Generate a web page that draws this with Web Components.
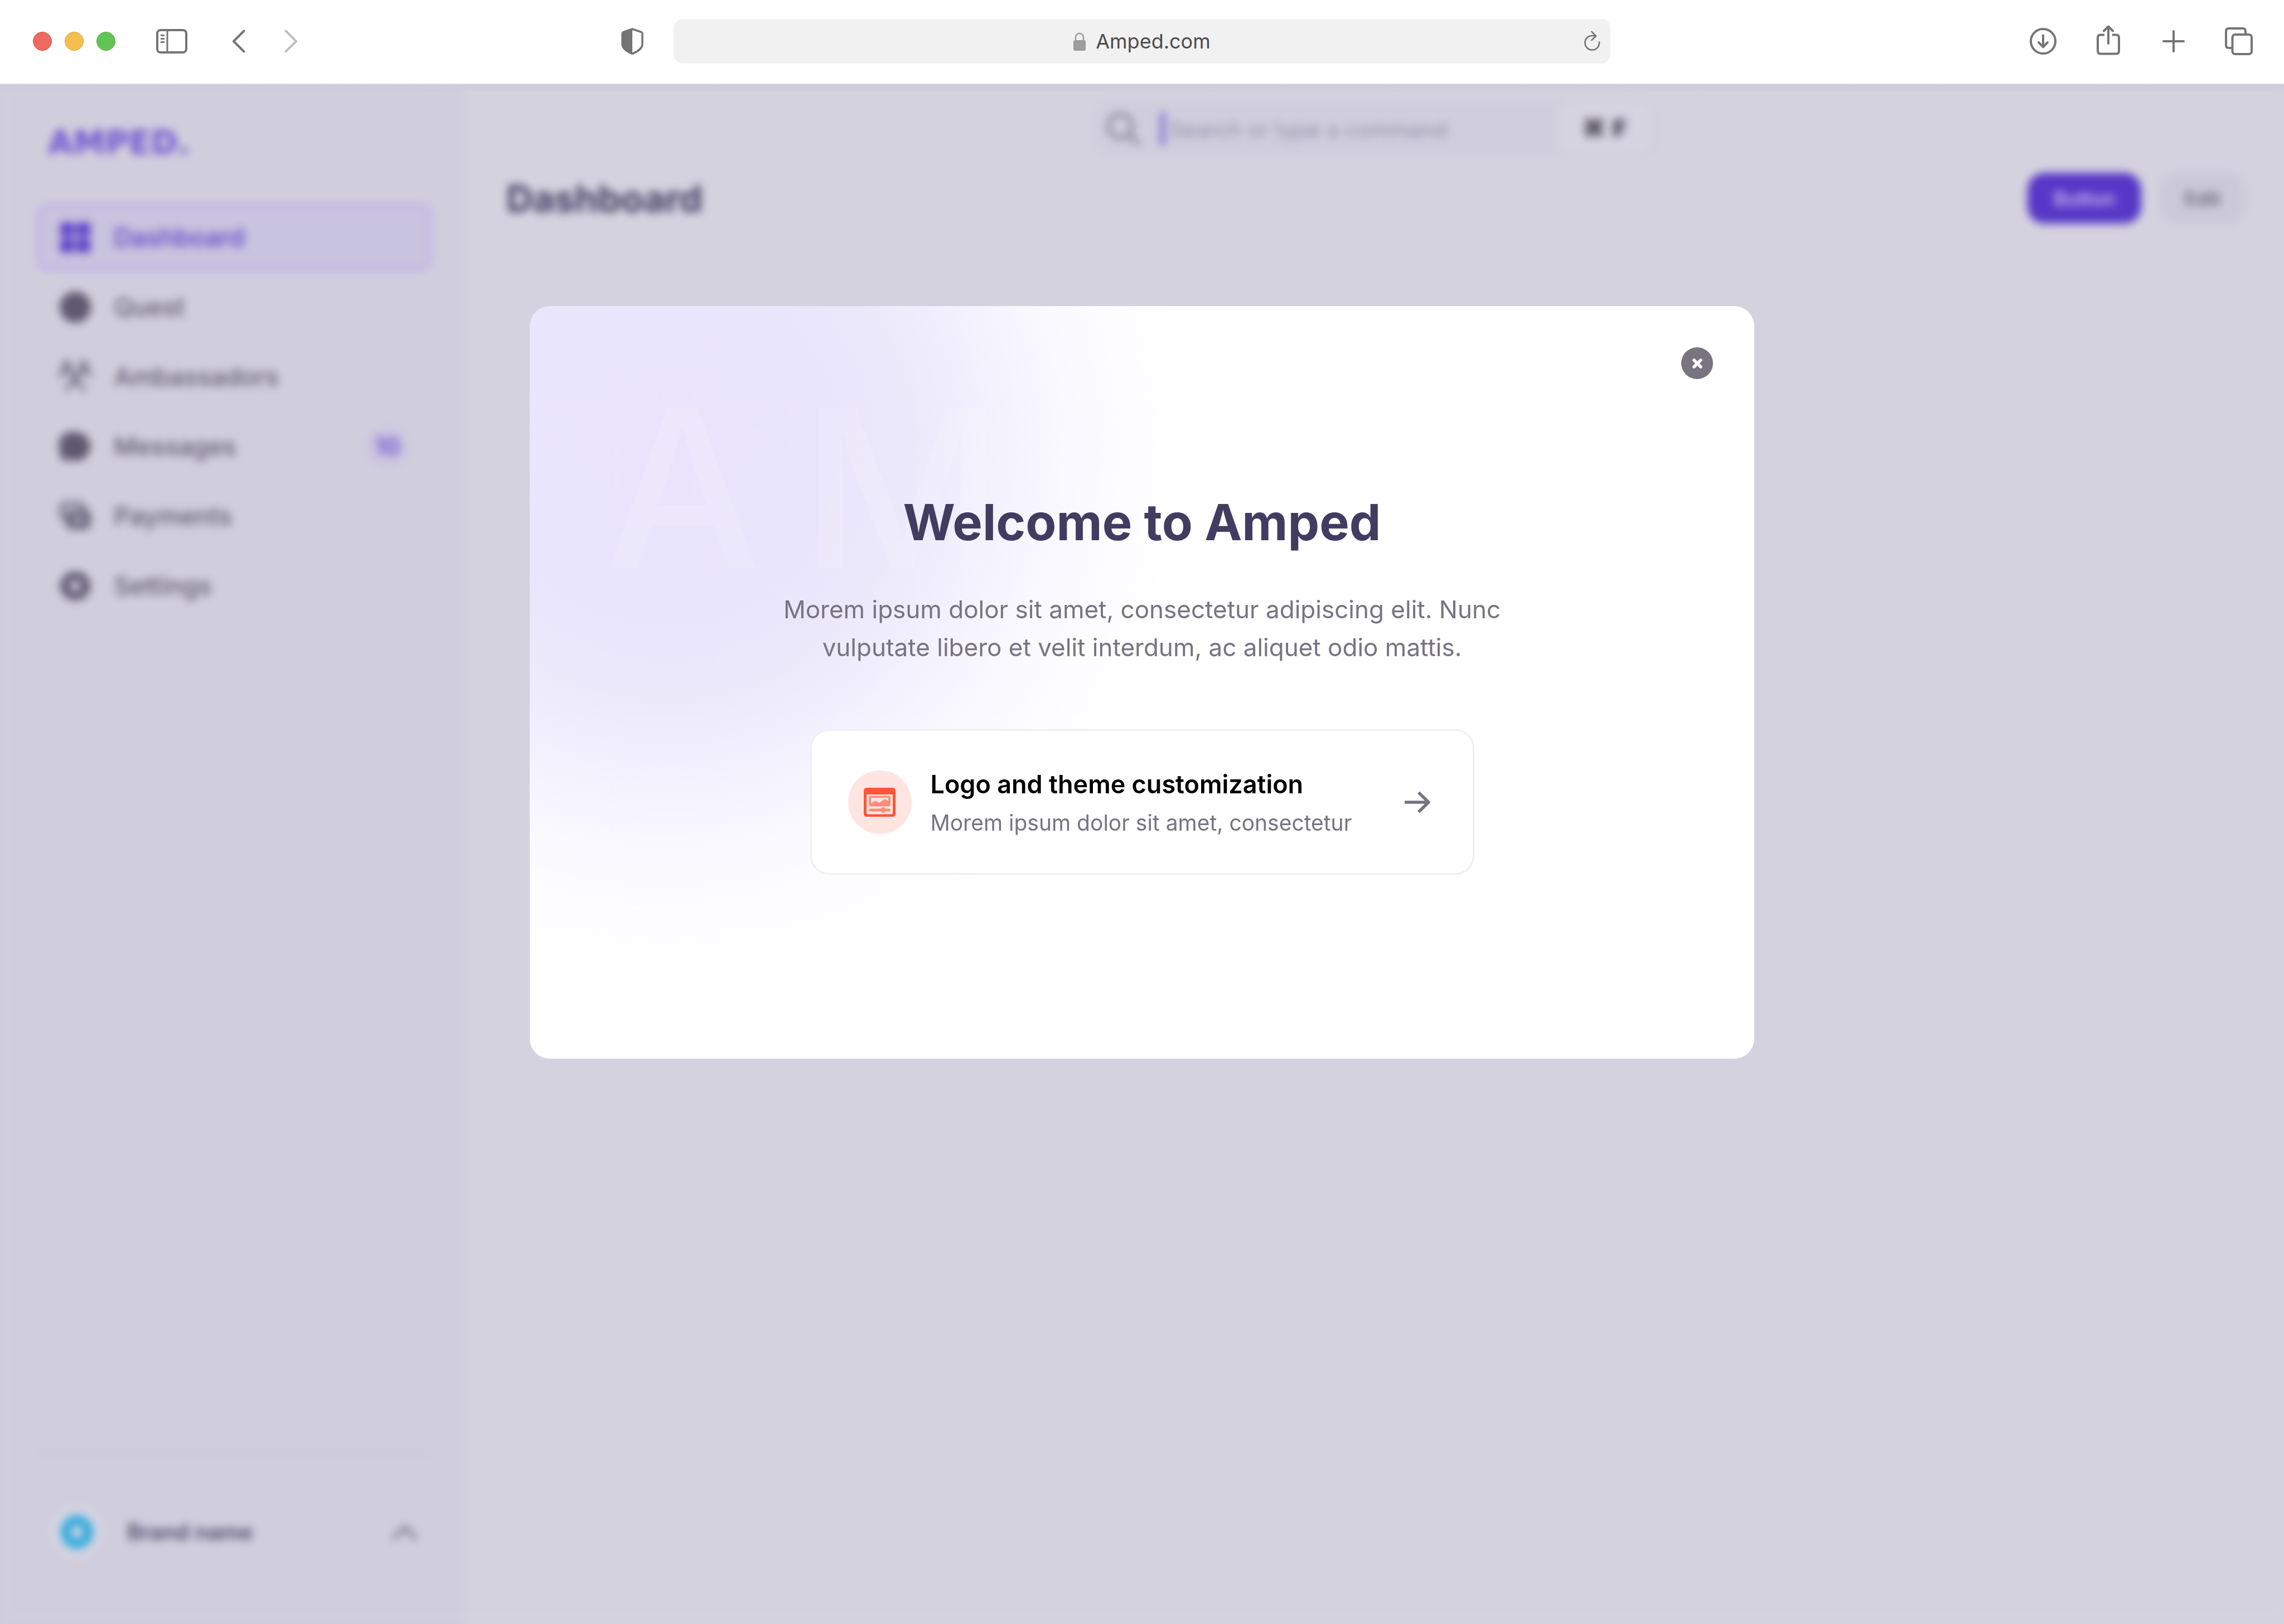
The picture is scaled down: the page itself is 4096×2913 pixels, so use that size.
<!DOCTYPE html>
<html lang="en">
<head>
<meta charset="utf-8">
<title>Amped</title>
<style>
  html, body { margin: 0; height: 100%; }
  body {
    font-family: Inter, "Noto Sans", sans-serif;
    background: #d4d2df;
    color: #433c61;
  }
</style>
</head>
<body>
<amped-window></amped-window>

<script>
const base = `*{box-sizing:border-box}a{color:inherit;text-decoration:none}
button,input{font:inherit;color:inherit;border:0;background:none;padding:0;margin:0;outline:0}
h1,h2,p{margin:0}`;

function define(name, css, html) {
  customElements.define(name, class extends HTMLElement {
    constructor() {
      super();
      const t = document.createElement('template');
      t.innerHTML = `<style>${base}${css}</style>${html}`;
      this.attachShadow({ mode: 'open' }).append(t.content.cloneNode(true));
    }
  });
}

/* ---------- icons ---------- */
const line = (w, d) => `<g fill="none" stroke="currentColor" stroke-width="${w}" stroke-linecap="round" stroke-linejoin="round">${d}</g>`;
const ICONS = {
  panel: ['0 0 56 44', line(4, `<rect x="2" y="2" width="52" height="40" rx="6"/><path d="M20 2v40M8 11.500h7M8 17.500h7M8 23.500h7" stroke-linecap="butt" stroke-width="3"/>`)],
  back: ['0 0 24 42', line(4, `<path d="M21.500 2.500 3 21l18.500 18.500"/>`)],
  forward: ['0 0 24 42', line(4, `<path d="M2.500 2.500 21 21 2.500 39.500"/>`)],
  shield: ['0 0 40 48', `<path d="M20 2 4 7.500Q2 8.300 2 10.500V29c0 8 8 13 18 17.500C30 42 38 37 38 29V10.500q0-2.200-2-3Z" fill="none" stroke="currentColor" stroke-width="3.500" stroke-linejoin="round"/><path d="M20 2 4 7.500Q2 8.300 2 10.500V29c0 8 8 13 18 17.500Z" fill="currentColor"/>`],
  lock: ['0 0 22 33', `<rect y="14" width="22" height="19" rx="3" fill="currentColor"/><path d="M4 15V9a7 7.300 0 0 1 14 0v6" fill="none" stroke="currentColor" stroke-width="2.600"/>`],
  reload: ['0 0 30 38', line(2.6, `<path d="M27 20.500A12.800 12.800 0 1 1 14.500 9q3.500 0 6.500.8M13.500 1.800 21 9.500l-7.500 7.500"/>`)],
  download: ['0 0 48 48', line(4, `<circle cx="24" cy="24" r="22"/><path d="M24 13.500v20M16 26l8 8.300 8-8.300"/>`)],
  share: ['0 0 42 54', line(4, `<path d="M14 17.500H7q-5 0-5 5V46q0 5.500 5 5.500h28q5 0 5-5.500V22.500q0-5-5-5h-7" stroke-linecap="butt"/><path d="M21 33V2.500M13 10.500l8-8 8 8"/>`)],
  plus: ['0 0 40 40', line(4, `<path d="M20 2v36M2 20h36"/>`)],
  tabs: ['0 0 50 50', line(4, `<path d="M12 37H7q-5 0-5-5V7q0-5 5-5h25q5 0 5 5v5" stroke-linecap="butt"/><rect x="13.500" y="13" width="34.500" height="35" rx="5"/>`)],
  search: ['0 0 62 62', line(7, `<circle cx="26" cy="26" r="21"/><path d="m41 41 17 17"/>`)],
  grid: ['0 0 58 58', `<g fill="currentColor"><rect x="2" y="2" width="25" height="25" rx="5"/><rect x="31" y="2" width="25" height="25" rx="5"/><rect x="2" y="31" width="25" height="25" rx="5"/><rect x="31" y="31" width="25" height="25" rx="5"/></g>`],
  quest: ['0 0 58 58', `<circle cx="29" cy="29" r="28" fill="currentColor"/>`],
  people: ['0 0 58 58', line(5, `<circle cx="14" cy="8" r="6"/><circle cx="44" cy="8" r="6"/><circle cx="29" cy="29" r="6"/><path d="M2 29q1-11 11-11 7 0 9 5M56 29q-1-11-11-11-7 0-9 5M14 54q2-14 15-14t15 14"/>`)],
  chat: ['0 0 58 58', `<path d="M30 3a26 26 0 1 1-10 50q-4-1.500-7 0-4 2-9 1.500-2-.5-1-2.500 2-3 1-7A26 26 0 0 1 30 3Z" fill="currentColor"/>`],
  cards: ['0 0 58 58', line(6, `<path d="M12 34q-8-2-8-10V15q0-9 9-9h22q8 0 10 8"/>`) + `<rect x="12" y="17" width="45" height="36" rx="10" fill="currentColor" opacity=".85"/><circle cx="34" cy="35" r="6" fill="#d0cedd"/>`],
  gear: ['0 0 58 58', `<path d="M29 2 37 5.500 46 6.500 50 15 56 22v14l-6 7-4 8.500-9 1L29 56l-8-3.500-9-1L8 43l-6-7V22l6-7 4-8.500 9-1Z" fill="currentColor"/><circle cx="29" cy="29" r="10" fill="#d0cedd"/>`],
  up: ['0 0 52 52', line(6, `<path d="m7 37 19-20 19 20"/>`)],
  close: ['0 0 20 20', `<path d="m4 4 12 12M16 4 4 16" stroke="currentColor" stroke-width="5.500" stroke-linecap="round"/>`],
  arrow: ['0 0 46 40', `<path d="M0 20h43M25 2.500 43 20 25 37.500" fill="none" stroke="currentColor" stroke-width="5.500" stroke-linejoin="round"/>`],
  theme: ['0 0 57 52', `<path fill="#ff5436" fill-rule="evenodd" d="M6 0h45q6 0 6 6v40q0 6-6 6H6q-6 0-6-6V6Q0 0 6 0ZM5 12v33q0 2.500 2.500 2.500h42q2.500 0 2.500-2.500V12Z"/>
    <g fill="#ff8b7b"><path fill-rule="evenodd" d="M13 14.500h31q4 0 4 4V29.500q0 4-4 4H13q-4 0-4-4V18.500q0-4 4-4ZM13 18v10.500l6.500-4.500q1.500-1 3 0l5 3 9-6q1.500-1 3 0l4.500 3V18Z"/>
    <rect x="9" y="37.500" width="39" height="5" rx="2.500"/><rect x="30" y="35" width="10" height="10" rx="5"/></g>`]
};
customElements.define('ui-icon', class extends HTMLElement {
  connectedCallback() {
    if (this.shadowRoot) return;
    const [box, body] = ICONS[this.getAttribute('name')];
    const [, , w, h] = box.split(' ');
    this.attachShadow({ mode: 'open' }).innerHTML =
      `<style>:host{display:block;flex:none;width:${w}px;height:${h}px}svg{display:block;width:100%;height:100%}</style>
       <svg viewBox="${box}" aria-hidden="true">${body}</svg>`;
  }
});

/* ---------- browser chrome ---------- */
define('browser-bar', `
  :host{display:grid;grid-template-columns:1fr 41% 1fr;align-items:center;height:151px;
    padding-bottom:1px;background:#fff;border-bottom:2px solid #f1f1f2;color:#747474}
  .left{display:flex;align-items:center;padding:0 54px 0 59px}
  .dots{display:flex;gap:23px;margin-right:73px}
  .dots i{width:34px;height:34px;border-radius:50%;border:1px solid}
  .dots i:nth-child(1){background:#ed6a5e;border-color:#ce5347}
  .dots i:nth-child(2){background:#f5bf4f;border-color:#d6a243}
  .dots i:nth-child(3){background:#61c554;border-color:#58a942}
  button{display:flex;align-items:center;justify-content:center}
  .nav{display:flex;gap:70px;margin-left:80px;margin-right:auto}
  .nav button:last-child{color:#bfbfbf}
  .url{display:flex;align-items:center;height:80px;border-radius:17px;background:#f1f1f1;padding:0 17px 0 47px}
  .url label{display:flex;align-items:center;justify-content:center;gap:18px;flex:1;color:#9d9d9d}
  .url input{field-sizing:content;font-size:36px;line-height:46px;color:#4c4c4c}
  .right{display:flex;justify-content:flex-end;gap:53px;padding-right:49px}
  .right button{width:64px;height:64px}
  .right button:nth-child(2){padding-bottom:4px}
`, `
  <div class="left">
    <div class="dots"><i></i><i></i><i></i></div>
    <button aria-label="Sidebar"><ui-icon name="panel"></ui-icon></button>
    <div class="nav">
      <button aria-label="Back"><ui-icon name="back"></ui-icon></button>
      <button aria-label="Forward"><ui-icon name="forward"></ui-icon></button>
    </div>
    <button aria-label="Privacy report"><ui-icon name="shield"></ui-icon></button>
  </div>
  <div class="url">
    <label><ui-icon name="lock"></ui-icon><input type="text" aria-label="Address" value="Amped.com"></label>
    <button aria-label="Reload"><ui-icon name="reload"></ui-icon></button>
  </div>
  <div class="right">
    <button aria-label="Downloads"><ui-icon name="download"></ui-icon></button>
    <button aria-label="Share"><ui-icon name="share"></ui-icon></button>
    <button aria-label="New tab"><ui-icon name="plus"></ui-icon></button>
    <button aria-label="Tab overview"><ui-icon name="tabs"></ui-icon></button>
  </div>
`);

/* ---------- sidebar ---------- */
define('nav-item', `
  :host{display:block;color:#5f5970}
  a{display:flex;align-items:center;gap:40px;height:119px;padding:0 35px;border:5px solid transparent;border-radius:20px;
    font-size:45px;line-height:56px;font-weight:500}
  :host([active]){color:#5a3fc8}
  :host([active]) a{background:#c8c3de;border-color:#bba9ea}
  ::slotted([slot=badge]){display:flex;align-items:center;justify-content:center;width:78px;height:72px;margin-left:auto;
    border-radius:36px;background:#cbc5e0;color:#6a50d0;font-size:42px;font-weight:600}
`, `<a href="#"><slot name="icon"></slot><slot></slot><slot name="badge"></slot></a>`);

define('brand-switcher', `
  :host{display:block;border-top:4px solid #cac8d6;padding-top:91px}
  button{display:flex;align-items:center;width:100%;padding:0 22px 0 26px;color:#4b4568;font-size:39px;line-height:50px;font-weight:600}
  i{display:flex;align-items:center;justify-content:center;width:91px;height:91px;border-radius:50%;background:#d6d5e2;margin-right:45px}
  i::before{content:"";width:22px;height:24px;border-radius:50%;border:18px solid #2da9de}
  ui-icon{margin-left:auto;color:#6f6b7c}
`, `<button><i></i><slot></slot><ui-icon name="up"></ui-icon></button>`);

define('app-sidebar', `
  :host{display:flex;flex-direction:column;flex:none;width:833px;padding:75px 59px 120px 66px;background:#d0cedd}
  .logo{padding-left:20px;font:700 58px/60px "DejaVu Sans",sans-serif;color:#6c53cf}
  nav{display:flex;flex-direction:column;gap:6px;margin-top:80px}
  brand-switcher{margin-top:auto}
`, `
  <a class="logo" href="#">AMPED.</a>
  <nav aria-label="Main">
    <nav-item active><ui-icon slot="icon" name="grid"></ui-icon>Dashboard</nav-item>
    <nav-item><ui-icon slot="icon" name="quest"></ui-icon>Quest</nav-item>
    <nav-item><ui-icon slot="icon" name="people"></ui-icon>Ambassadors</nav-item>
    <nav-item><ui-icon slot="icon" name="chat"></ui-icon>Messages<span slot="badge">10</span></nav-item>
    <nav-item><ui-icon slot="icon" name="cards"></ui-icon>Payments</nav-item>
    <nav-item><ui-icon slot="icon" name="gear"></ui-icon>Settings</nav-item>
  </nav>
  <brand-switcher>Brand name</brand-switcher>
`);

/* ---------- dashboard ---------- */
define('command-search', `
  :host{display:flex;width:1006px;height:98px;border-radius:28px;background:#d0cedc}
  label{display:flex;align-items:center;flex:1;padding-left:19px;color:#8a8698}
  .caret{width:8px;height:60px;margin:0 8px 0 36px;background:#7a63dc}
  input{flex:1;min-width:0;font-size:39px;line-height:48px;padding-top:4px}
  input::placeholder{color:#958fab;opacity:1}
  kbd{display:flex;align-items:center;justify-content:center;gap:14px;width:172px;margin:3px 6px 5px 0;border-radius:24px;
    background:#d6d4e1;color:#1d1a28;font:700 43px/48px "DejaVu Sans",sans-serif}
  kbd span{font-family:Inter,sans-serif}
`, `
  <label><ui-icon name="search"></ui-icon><span class="caret"></span>
    <input type="search" aria-label="Search" placeholder="Search or type a command"></label>
  <kbd>⌘ <span>F</span></kbd>
`);

define('app-main', `
  :host{display:flex;flex-direction:column;flex:1;padding:31px 70px 0 75px;gap:30px}
  command-search{align-self:center}
  header{display:flex;align-items:center;gap:34px}
  h1{flex:1;font-size:66px;line-height:80px;font-weight:700;color:#433c61}
  button{height:91px;border-radius:30px;font-size:35px;line-height:44px;font-weight:600}
  .primary{width:204px;background:#5637c7;color:#c4b9ea}
  .plain{width:152px;background:#cbc9d8;color:#6d687a}
`, `
  <command-search></command-search>
  <header><h1>Dashboard</h1><button class="primary">Button</button><button class="plain">Edit</button></header>
`);

/* ---------- dialog ---------- */
define('option-card', `
  :host{display:block}
  a{display:flex;align-items:center;padding:62px 76px 62px 65px;border:3px solid #efefef;border-radius:34px;background:#fff}
  .round{display:flex;align-items:center;justify-content:center;width:114px;height:114px;margin-right:34px;border-radius:50%;background:#ffe5e1}
  .text{display:flex;flex-direction:column;gap:6px;flex:1;white-space:nowrap}
  .title{font-size:45px;line-height:68px;font-weight:600;color:#000}
  .note{font-size:39px;line-height:57px;color:#777381}
  .go{color:#777381}
`, `
  <a href="#">
    <span class="round"><ui-icon name="theme"></ui-icon></span>
    <span class="text"><span class="title"><slot name="title"></slot></span><span class="note"><slot></slot></span></span>
    <ui-icon class="go" name="arrow"></ui-icon>
  </a>
`);

define('welcome-dialog', `
  :host{position:relative;display:flex;flex-direction:column;align-items:center;width:2196px;padding:74px 74px 330px;
    border-radius:36px;overflow:hidden;text-align:center;
    background:radial-gradient(circle 950px at 242px 256px,#e9e4fb 0,#e9e5fb 32%,#ece9fb 47%,#f2f0fd 60%,#f8f7fe 72%,#fcfcff 85%,#fff 100%) #fff}
  .mark{position:absolute;left:134px;top:128px;display:flex;gap:72px;font-size:396px;line-height:396px;font-weight:500;color:rgba(255,255,255,.14)}
  .close{display:flex;align-items:center;justify-content:center;align-self:flex-end;width:57px;height:57px;border-radius:50%;
    background:#797580;color:#fff}
  h2{position:relative;margin-top:201px;font-size:90px;line-height:112px;font-weight:700;color:#433c61}
  p{position:relative;width:1340px;margin-top:66px;font-size:44px;line-height:68px;color:#777381}
  option-card{position:relative;width:1191px;margin-top:113px;text-align:left}
`, `
  <div class="mark" aria-hidden="true"><span>A</span><span>M</span></div>
  <button class="close" aria-label="Close"><ui-icon name="close"></ui-icon></button>
  <h2>Welcome to Amped</h2>
  <p>Morem ipsum dolor sit amet, consectetur adipiscing elit. Nunc vulputate libero et velit interdum, ac aliquet odio mattis.</p>
  <option-card><span slot="title">Logo and theme customization</span>Morem ipsum dolor sit amet, consectetur</option-card>
`);

define('amped-window', `
  :host{display:flex;flex-direction:column;min-height:100vh}
  .page{position:relative;display:flex;flex:1;background:#d4d2df}
  .scrim{position:absolute;inset:0;display:flex;justify-content:center;align-items:flex-start;padding-top:398px;
    backdrop-filter:blur(8px);background:linear-gradient(#cdcbda 0,rgba(212,210,223,0) 16px)}
`, `
  <browser-bar></browser-bar>
  <div class="page">
    <app-sidebar></app-sidebar>
    <app-main></app-main>
    <div class="scrim"><welcome-dialog role="dialog" aria-modal="true" aria-label="Welcome to Amped"></welcome-dialog></div>
  </div>
`);
</script>
</body>
</html>
